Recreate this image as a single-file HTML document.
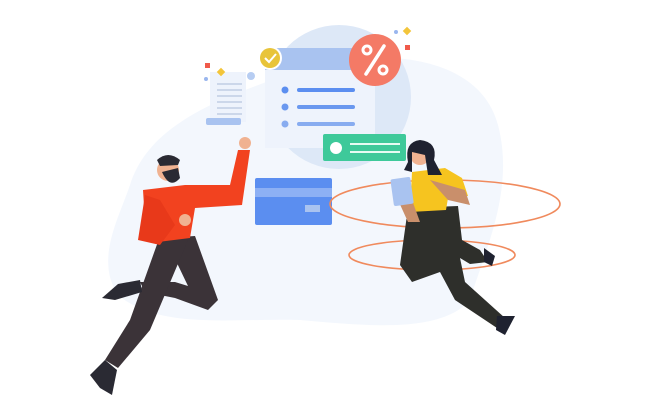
<!DOCTYPE html>
<html><head><style>html,body{margin:0;padding:0;background:#fff;width:650px;height:404px;overflow:hidden}</style></head>
<body>
<svg width="650" height="404" viewBox="0 0 650 404" xmlns="http://www.w3.org/2000/svg">
<path d="M130 185 C150 120 230 95 300 70 C380 45 480 55 498 125 C515 190 485 250 470 300 C440 335 360 325 300 320 C230 318 160 330 118 295 C95 260 118 220 130 185Z" fill="#f3f7fd"/>
<circle cx="339" cy="97" r="72" fill="#dde8f7"/>
<!-- receipt -->
<rect x="210" y="72" width="36" height="50" fill="#eef3fc"/>
<g stroke="#b7c6de" stroke-width="1.2"><line x1="217" y1="84" x2="242" y2="84"/><line x1="217" y1="90" x2="242" y2="90"/><line x1="217" y1="96" x2="242" y2="96"/><line x1="217" y1="102" x2="242" y2="102"/><line x1="217" y1="108" x2="242" y2="108"/><line x1="217" y1="114" x2="242" y2="114"/></g>
<rect x="206" y="118" width="35" height="7" rx="2" fill="#a9c3f0"/>
<circle cx="251" cy="76" r="4" fill="#b7cdf2"/>
<rect x="205" y="63" width="5" height="5" fill="#f05a4a"/>
<rect x="218" y="69" width="6" height="6" fill="#f3c53a" transform="rotate(45 221 72)"/>
<circle cx="206" cy="79" r="2" fill="#9ab6ee"/>
<!-- doc -->
<rect x="265" y="48" width="110" height="100" fill="#eef3fc"/>
<rect x="265" y="48" width="110" height="22" fill="#a9c3f0"/>
<circle cx="285" cy="90" r="3.5" fill="#5b8ef0"/><rect x="297" y="88" width="58" height="4" rx="2" fill="#5b8ef0"/>
<circle cx="285" cy="107" r="3.5" fill="#6a98ef"/><rect x="297" y="105" width="58" height="4" rx="2" fill="#6a98ef"/>
<circle cx="285" cy="124" r="3.5" fill="#88acf0"/><rect x="297" y="122" width="58" height="4" rx="2" fill="#88acf0"/>
<circle cx="270" cy="58" r="12" fill="#fff"/><circle cx="270" cy="58" r="10" fill="#e8c43a"/>
<path d="M265 58 l4 4 l7 -8" stroke="#fff" stroke-width="2" fill="none"/>
<circle cx="375" cy="60" r="26" fill="#f47a66"/>
<line x1="366" y1="74" x2="384" y2="46" stroke="#fff" stroke-width="3.5" stroke-linecap="round"/>
<circle cx="367" cy="50" r="4" fill="none" stroke="#fff" stroke-width="3"/>
<circle cx="383" cy="70" r="4" fill="none" stroke="#fff" stroke-width="3"/>
<rect x="404" y="28" width="6" height="6" fill="#f3c53a" transform="rotate(45 407 31)"/>
<rect x="405" y="45" width="5" height="5" fill="#f05a4a"/>
<circle cx="396" cy="32" r="2" fill="#9ab6ee"/>
<!-- green card -->
<rect x="323" y="134" width="83" height="27" rx="2" fill="#3ec99a"/>
<circle cx="336" cy="148" r="6" fill="#fff"/>
<rect x="350" y="143" width="50" height="2" fill="#e6fbf3"/><rect x="350" y="151" width="50" height="2" fill="#e6fbf3"/>
<!-- bank card -->
<rect x="255" y="178" width="77" height="47" rx="2" fill="#5b8ef0"/>
<rect x="255" y="188" width="77" height="9" fill="#8db0f4"/>
<rect x="305" y="205" width="15" height="7" fill="#a9c3f0"/>
<!-- ellipses -->
<ellipse cx="445" cy="204" rx="115" ry="24" fill="none" stroke="#f08a5d" stroke-width="1.6"/>
<ellipse cx="432" cy="255" rx="83" ry="15" fill="none" stroke="#f08a5d" stroke-width="1.6"/>
<!-- man -->
<path d="M165 238 L195 236 L218 300 L208 310 L175 298 L145 292 L140 282 L175 282 L188 286 Z" fill="#3b3338"/>
<path d="M160 236 L188 240 L150 330 L118 368 L105 360 L130 320 Z" fill="#3b3338"/>
<path d="M140 280 L118 284 L102 298 L115 300 L142 292 Z" fill="#2a2a33"/>
<path d="M105 360 L90 375 L100 388 L112 395 L117 370 Z" fill="#2a2a33"/>
<path d="M143 190 L185 185 L230 185 L238 150 L250 150 L242 205 L195 208 L190 238 L158 242 L145 222 Z" fill="#f2421f"/>
<path d="M145 195 L138 240 L160 245 L175 225 L160 200Z" fill="#e8391a"/>
<circle cx="245" cy="143" r="6" fill="#f0b291"/>
<circle cx="185" cy="220" r="6" fill="#f0b291"/>
<circle cx="168" cy="170" r="11" fill="#f0b291"/>
<path d="M157 160 Q168 150 180 160 L178 165 L160 166Z" fill="#2a2a33"/>
<path d="M162 172 Q170 190 180 178 L178 168 Z" fill="#2a2a33"/>
<!-- woman -->
<path d="M408 208 L458 206 L462 240 L480 250 L488 262 L470 264 L460 258 L465 282 L505 318 L497 328 L455 300 L440 272 L412 282 L400 265 Z" fill="#2e2f2b"/>
<path d="M484 248 L495 256 L492 266 L484 262Z" fill="#1f2230"/>
<path d="M497 316 L515 316 L505 335 L496 330Z" fill="#1f2230"/>
<path d="M412 172 L445 168 L462 178 L468 196 L448 198 L446 210 L410 212 Z" fill="#f6c41f"/>
<path d="M430 180 L465 190 L470 205 L448 200Z" fill="#c98f6b"/>
<path d="M398 200 L408 222 L420 222 L412 200Z" fill="#c98f6b"/>
<rect x="392" y="178" width="20" height="27" rx="2" fill="#a9c3f0" transform="rotate(-8 402 191)"/>
<circle cx="420" cy="155" r="10" fill="#f0b291"/>
<path d="M408 162 Q404 142 420 140 Q438 142 434 160 L442 175 L428 175 L425 155 L412 152 L412 172 L404 170Z" fill="#1f2230"/>
</svg>
</body></html>
